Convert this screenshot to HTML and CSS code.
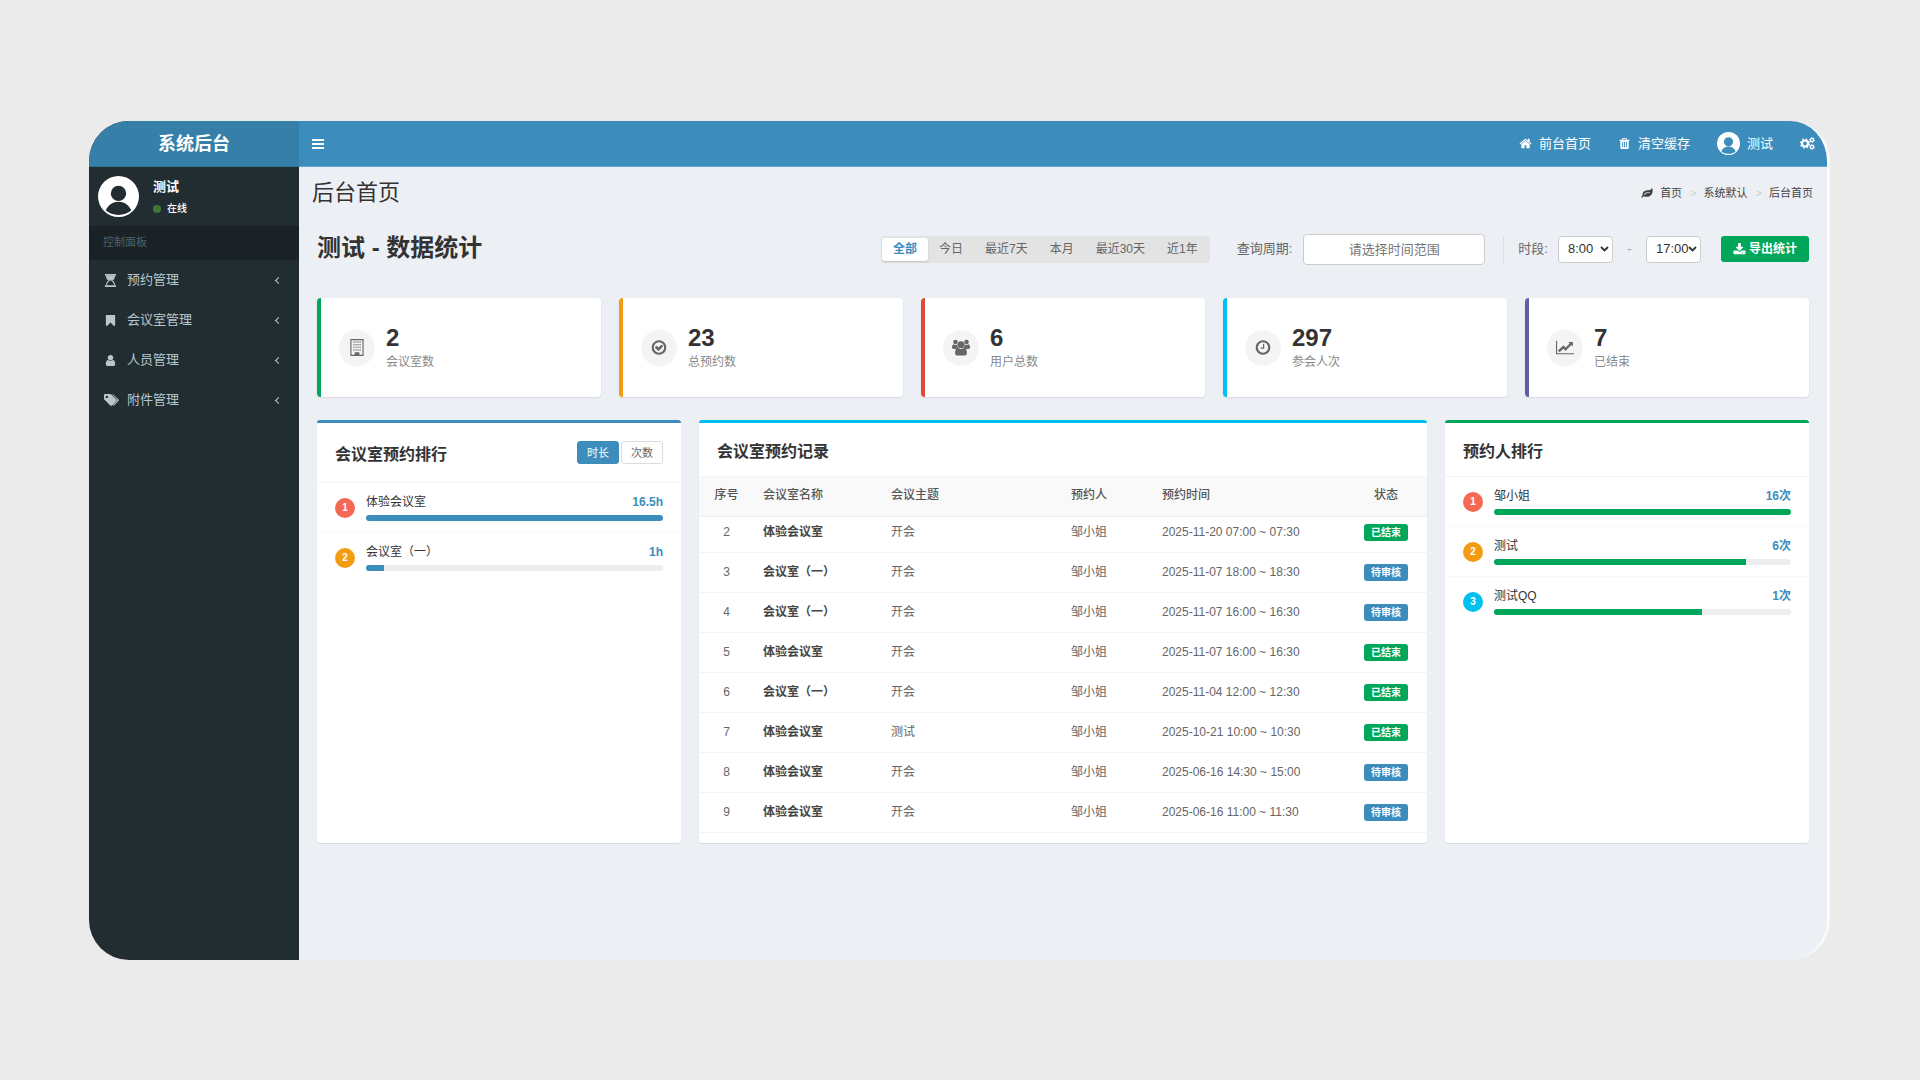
FILE: index.html
```html
<!DOCTYPE html>
<html lang="zh-CN">
<head>
	<meta charset="UTF-8">
	<meta name="viewport" content="width=device-width, initial-scale=1.0">
	<title>系统后台</title>
	<link rel="stylesheet" href="styles.css">
</head>
<body>
	<div class="app">
		<aside class="sidebar">
			<a class="logo" href="#">系统后台</a>
			<div class="user-panel">
				<svg class="avatar" viewBox="0 0 40 40"><circle cx="20" cy="20" r="20" fill="#fff"/><circle cx="20" cy="17" r="7.500" fill="#222d32"/><path d="M7.500 33.500C10 28 14.500 25 20 25s10 3 12.500 8.500C29 36.500 25 38 20 38s-9-1.500-12.500-4.500z" fill="#222d32"/></svg>
				<div>
					<p class="user-name">测试</p>
					<p class="user-status"><i class="dot"></i>在线</p>
				</div>
			</div>
			<div class="menu-header">控制面板</div>
			<nav class="menu">
				<a href="#">
					<svg viewBox="0 0 14 14"><path d="M1 0h12v2H1zM1 12h12v2H1z"/><path d="M2.500 2c0 3 1.500 4 3 5-1.500 1-3 2-3 5M11.500 2c0 3-1.500 4-3 5 1.500 1 3 2 3 5" fill="none" stroke="currentColor" stroke-width="1.200"/><path d="M3 2h8c0 2.500-1.500 4-3.200 5H6.200C4.500 6 3 4.500 3 2z"/></svg>
					<span>预约管理</span><i class="arrow"></i>
				</a>
				<a href="#">
					<svg viewBox="0 0 1792 1792"><path d="M1420 128q23 0 44 9 33 13 52.500 41t19.500 62v1289q0 34-19.500 62t-52.500 41q-19 8-44 8-48 0-83-32l-441-424-441 424q-36 33-83 33-23 0-44-9-33-13-52.500-41t-19.500-62v-1289q0-34 19.500-62t52.500-41q21-9 44-9h1048z"/></svg>
					<span>会议室管理</span><i class="arrow"></i>
				</a>
				<a href="#">
					<svg viewBox="0 0 1792 1792"><path d="M1536 1399q0 109-62.500 187t-150.500 78h-854q-88 0-150.500-78t-62.500-187q0-85 8.500-160.500t31.500-152 58.500-131 94-89 134.500-34.500q131 128 313 128t313-128q76 0 134.500 34.500t94 89 58.500 131 31.500 152 8.500 160.500zm-256-887q0 159-112.500 271.500t-271.500 112.500-271.500-112.500-112.500-271.500 112.500-271.500 271.500-112.500 271.500 112.500 112.500 271.500z"/></svg>
					<span>人员管理</span><i class="arrow"></i>
				</a>
				<a href="#">
					<svg class="tags" viewBox="0 0 15 12"><path fill-rule="evenodd" d="M1 0h5c.6 0 1.200.2 1.600.7l4.600 4.600c.6.6.6 1.200 0 1.800l-4.200 4.300c-.6.6-1.200.6-1.800 0L1.700 6.800C1.200 6.400 0 5.600 0 5V1c0-.6.4-1 1-1zm1.800 1.700a1.200 1.200 0 1 0 0 2.400 1.200 1.200 0 0 0 0-2.400z"/><path d="M7.800 0c.7 0 1.200.3 1.700.7l4.900 4.600c.6.6.6 1.200 0 1.800l-4.200 4.200c-.6.6-1.100.5-1.600 0l4.300-4.400c.6-.6.6-1.200 0-1.800z"/></svg>
					<span>附件管理</span><i class="arrow"></i>
				</a>
			</nav>
		</aside>

		<div class="main">
			<header class="navbar">
				<button class="toggle" type="button" aria-label="菜单">
					<svg viewBox="0 0 12 10"><path d="M0 0h12v2H0zM0 4h12v2H0zM0 8h12v2H0z"/></svg>
				</button>
				<nav class="nav-links">
					<a href="#">
						<svg viewBox="0 0 1792 1792"><path d="M1472 992v480q0 26-19 45t-45 19h-384v-384h-256v384h-384q-26 0-45-19t-19-45v-480q0-1 .5-3t.5-3l575-474 575 474q1 2 1 6zm223-69l-62 74q-8 9-21 11h-3q-13 0-21-7l-692-577-692 577q-12 8-24 7-13-2-21-11l-62-74q-8-10-7-23.500t11-21.500l719-599q32-26 76-26t76 26l244 204v-195q0-14 9-23t23-9h192q14 0 23 9t9 23v408l219 182q10 8 11 21.500t-7 23.500z"/></svg>
						前台首页
					</a>
					<a href="#">
						<svg viewBox="0 0 1792 1792"><path d="M704 1376v-704q0-14-9-23t-23-9h-64q-14 0-23 9t-9 23v704q0 14 9 23t23 9h64q14 0 23-9t9-23zm256 0v-704q0-14-9-23t-23-9h-64q-14 0-23 9t-9 23v704q0 14 9 23t23 9h64q14 0 23-9t9-23zm256 0v-704q0-14-9-23t-23-9h-64q-14 0-23 9t-9 23v704q0 14 9 23t23 9h64q14 0 23-9t9-23zm-544-992h448l-48-117q-7-9-17-11h-317q-10 2-17 11zm928 32v64q0 14-9 23t-23 9h-96v948q0 83-47 143.500t-113 60.500h-832q-66 0-113-58.500t-47-141.500v-952h-96q-14 0-23-9t-9-23v-64q0-14 9-23t23-9h309l70-167q15-37 54-63t79-26h320q40 0 79 26t54 63l70 167h309q14 0 23 9t9 23z"/></svg>
						清空缓存
					</a>
					<a href="#">
						<svg class="avatar-small" viewBox="0 0 40 40"><circle cx="20" cy="20" r="20" fill="#fff"/><circle cx="20" cy="17" r="8" fill="#3c8dbc"/><path d="M7.500 33.500C10 28 14.500 25 20 25s10 3 12.500 8.500C29 36.500 25 38 20 38s-9-1.500-12.500-4.500z" fill="#3c8dbc"/></svg>
						测试
					</a>
					<a href="#" aria-label="设置">
						<svg class="cogs" viewBox="0 0 15 13"><g fill="none" stroke="currentColor"><circle cx="5" cy="6.500" r="3" stroke-width="2.200"/><circle cx="5" cy="6.500" r="4.500" stroke-width="1.200" stroke-dasharray="1.770 1.770"/><circle cx="12" cy="3" r="1.600" stroke-width="1.300"/><circle cx="12" cy="3" r="2.500" stroke-width=".8" stroke-dasharray="1.300 1.300"/><circle cx="12" cy="10" r="1.600" stroke-width="1.300"/><circle cx="12" cy="10" r="2.500" stroke-width=".8" stroke-dasharray="1.300 1.300"/></g></svg>
					</a>
				</nav>
			</header>

			<div class="page-head">
				<h1>后台首页</h1>
				<ol class="breadcrumb">
					<li><a href="#"><svg viewBox="0 0 14 12"><path fill-rule="evenodd" d="M13.300.3C14.300 3 14 7 11 9.200 8.500 11 5.500 10.800 3.300 9.900c-.8.4-1.100 1.800-2 1.800-.6 0-1.200-.7-1.100-1.200.1-.7 1.300-1.100 1.500-1.800C1.200 5 3.500 3 7 2.700c2.500-.2 4.500-.2 5.500-2.100.2-.4.6-.6.8-.3zM10 4.700C7 4.500 5.200 5.600 3.700 7.300c-.4.500.2 1.100.7.700C6 6.500 7.300 5.700 10 5.700c.7 0 .7-1 0-1z"/></svg>首页</a></li>
					<li><a href="#">系统默认</a></li>
					<li><a href="#">后台首页</a></li>
				</ol>
			</div>

			<main class="content">
				<div class="toolbar">
					<h2>测试 - 数据统计</h2>
					<div class="range-tabs">
						<button class="active" type="button">全部</button>
						<button type="button">今日</button>
						<button type="button">最近7天</button>
						<button type="button">本月</button>
						<button type="button">最近30天</button>
						<button type="button">近1年</button>
					</div>
					<div class="period">
						<label for="period">查询周期:</label>
						<input id="period" type="text" placeholder="请选择时间范围">
					</div>
					<div class="hours">
						<label for="hour-from">时段:</label>
						<select id="hour-from"><option>8:00</option></select>
						<span class="dash">-</span>
						<select id="hour-to" aria-label="结束时段"><option>17:00</option></select>
					</div>
					<button class="export" type="button">
						<svg viewBox="0 0 1792 1792"><path d="M1344 1344q0-26-19-45t-45-19-45 19-19 45 19 45 45 19 45-19 19-45zm256 0q0-26-19-45t-45-19-45 19-19 45 19 45 45 19 45-19 19-45zm128-224v320q0 40-28 68t-68 28h-1472q-40 0-68-28t-28-68v-320q0-40 28-68t68-28h465l135 136q58 56 136 56t136-56l136-136h464q40 0 68 28t28 68zm-325-569q17 41-14 70l-448 448q-18 19-45 19t-45-19l-448-448q-31-29-14-70 17-39 59-39h256v-448q0-26 19-45t45-19h256q26 0 45 19t19 45v448h256q42 0 59 39z"/></svg>
						导出统计
					</button>
				</div>

				<div class="stats">
					<div class="stat green">
						<div class="stat-icon"><svg viewBox="0 0 14 18"><path fill-rule="evenodd" d="M0 0h14v18H0zM1.200 1.200v15.600h3.300V14h5v2.800h3.300V1.200z"/><path d="M3 2.500h1.500V4H3zM5.200 2.500h1.500V4H5.200zM7.400 2.500h1.500V4H7.400zM9.600 2.500h1.500V4H9.600zM3 5.300h1.500v1.500H3zM5.200 5.300h1.500v1.500H5.200zM7.400 5.300h1.500v1.500H7.400zM9.600 5.300h1.500v1.500H9.600zM3 8.100h1.500v1.500H3zM5.200 8.100h1.500v1.500H5.200zM7.400 8.100h1.500v1.500H7.400zM9.600 8.100h1.500v1.500H9.600zM3 10.900h1.500v1.500H3zM5.200 10.900h1.500v1.500H5.200zM7.400 10.900h1.500v1.500H7.400zM9.600 10.900h1.500v1.500H9.600zM5.700 15h2.600v2H5.700z" opacity=".7"/></svg></div>
						<div><strong>2</strong><span>会议室数</span></div>
					</div>
					<div class="stat orange">
						<div class="stat-icon"><svg viewBox="0 0 1792 1792"><path d="M1299 813l-422 422q-19 19-45 19t-45-19l-294-294q-19-19-19-45t19-45l102-102q19-19 45-19t45 19l147 147 275-275q19-19 45-19t45 19l102 102q19 19 19 45t-19 45zm141 83q0-148-73-273t-198-198-273-73-273 73-198 198-73 273 73 273 198 198 273 73 273-73 198-198 73-273zm224 0q0 209-103 385.500t-279.500 279.500-385.500 103-385.500-103-279.500-279.500-103-385.500 103-385.500 279.500-279.500 385.500-103 385.500 103 279.500 279.500 103 385.500z"/></svg></div>
						<div><strong>23</strong><span>总预约数</span></div>
					</div>
					<div class="stat red">
						<div class="stat-icon"><svg viewBox="0 0 18 17"><circle cx="3.500" cy="3" r="2.300"/><circle cx="14.500" cy="3" r="2.300"/><path d="M1.500 5.200c1.200.9 2.800.9 4 0-.3 1.800.2 2.800 1 3.800-1 .1-1.900.5-2.500 1H2C.8 10 0 9.400 0 8.500c0-1.500.3-3 1.500-3.300zM16.500 5.200c-1.200.9-2.800.9-4 0 .3 1.800-.2 2.800-1 3.800 1 .1 1.900.5 2.500 1h2c1.200 0 2-.6 2-1.500 0-1.500-.3-3-1.500-3.300z"/><circle cx="9" cy="5.700" r="3.400"/><path d="M6 8.800c1.800 1.500 4.200 1.500 6 0 2.200.2 2.900 2.400 2.900 5.200 0 1.600-1 2.600-2.400 2.600h-7C4.100 16.600 3.100 15.600 3.100 14c0-2.800.7-5 2.900-5.200z"/></svg></div>
						<div><strong>6</strong><span>用户总数</span></div>
					</div>
					<div class="stat cyan">
						<div class="stat-icon"><svg viewBox="0 0 1792 1792"><path d="M1024 544v448q0 14-9 23t-23 9h-320q-14 0-23-9t-9-23v-64q0-14 9-23t23-9h224v-352q0-14 9-23t23-9h64q14 0 23 9t9 23zm416 352q0-148-73-273t-198-198-273-73-273 73-198 198-73 273 73 273 198 198 273 73 273-73 198-198 73-273zm224 0q0 209-103 385.500t-279.500 279.500-385.500 103-385.500-103-279.500-279.500-103-385.500 103-385.500 279.500-279.500 385.500-103 385.500 103 279.500 279.500 103 385.500z"/></svg></div>
						<div><strong>297</strong><span>参会人次</span></div>
					</div>
					<div class="stat purple">
						<div class="stat-icon"><svg viewBox="0 0 2048 1792"><path d="M2048 1536v128h-2048v-1536h128v1408h1920zm-128-1248v435q0 21-19.500 29.500t-35.500-7.500l-121-121-633 633q-10 10-23 10t-23-10l-233-233-416 416-192-192 585-585q10-10 23-10t23 10l233 233 464-464-121-121q-16-16-7.500-35.500t29.500-19.500h435q14 0 23 9t9 23z"/></svg></div>
						<div><strong>7</strong><span>已结束</span></div>
					</div>
				</div>

				<div class="panels">
					<section class="panel blue">
						<div class="panel-head">
							<h3>会议室预约排行</h3>
							<div class="switch">
								<button class="active" type="button">时长</button>
								<button type="button">次数</button>
							</div>
						</div>
						<ul class="rank">
							<li>
								<b class="num n1">1</b>
								<div class="rank-info">
									<p><span>体验会议室</span><strong>16.5h</strong></p>
									<div class="bar"><i style="width:100%"></i></div>
								</div>
							</li>
							<li>
								<b class="num n2">2</b>
								<div class="rank-info">
									<p><span>会议室（一）</span><strong>1h</strong></p>
									<div class="bar"><i style="width:6%"></i></div>
								</div>
							</li>
						</ul>
					</section>

					<section class="panel aqua">
						<div class="panel-head"><h3>会议室预约记录</h3></div>
						<table class="records">
							<colgroup>
								<col class="c-no"><col class="c-room"><col><col class="c-user"><col class="c-time"><col class="c-state">
							</colgroup>
							<thead>
								<tr><th>序号</th><th>会议室名称</th><th>会议主题</th><th>预约人</th><th>预约时间</th><th>状态</th></tr>
							</thead>
							<tbody>
								<tr><td>2</td><td>体验会议室</td><td>开会</td><td>邹小姐</td><td>2025-11-20 07:00 ~ 07:30</td><td><span class="tag done">已结束</span></td></tr>
								<tr><td>3</td><td>会议室（一）</td><td>开会</td><td>邹小姐</td><td>2025-11-07 18:00 ~ 18:30</td><td><span class="tag">待审核</span></td></tr>
								<tr><td>4</td><td>会议室（一）</td><td>开会</td><td>邹小姐</td><td>2025-11-07 16:00 ~ 16:30</td><td><span class="tag">待审核</span></td></tr>
								<tr><td>5</td><td>体验会议室</td><td>开会</td><td>邹小姐</td><td>2025-11-07 16:00 ~ 16:30</td><td><span class="tag done">已结束</span></td></tr>
								<tr><td>6</td><td>会议室（一）</td><td>开会</td><td>邹小姐</td><td>2025-11-04 12:00 ~ 12:30</td><td><span class="tag done">已结束</span></td></tr>
								<tr><td>7</td><td>体验会议室</td><td>测试</td><td>邹小姐</td><td>2025-10-21 10:00 ~ 10:30</td><td><span class="tag done">已结束</span></td></tr>
								<tr><td>8</td><td>体验会议室</td><td>开会</td><td>邹小姐</td><td>2025-06-16 14:30 ~ 15:00</td><td><span class="tag">待审核</span></td></tr>
								<tr><td>9</td><td>体验会议室</td><td>开会</td><td>邹小姐</td><td>2025-06-16 11:00 ~ 11:30</td><td><span class="tag">待审核</span></td></tr>
							</tbody>
						</table>
					</section>

					<section class="panel green">
						<div class="panel-head"><h3>预约人排行</h3></div>
						<ul class="rank">
							<li>
								<b class="num n1">1</b>
								<div class="rank-info">
									<p><span>邹小姐</span><strong>16次</strong></p>
									<div class="bar"><i style="width:100%"></i></div>
								</div>
							</li>
							<li>
								<b class="num n2">2</b>
								<div class="rank-info">
									<p><span>测试</span><strong>6次</strong></p>
									<div class="bar"><i style="width:85%"></i></div>
								</div>
							</li>
							<li>
								<b class="num n3">3</b>
								<div class="rank-info">
									<p><span>测试QQ</span><strong>1次</strong></p>
									<div class="bar"><i style="width:70%"></i></div>
								</div>
							</li>
						</ul>
					</section>
				</div>
			</main>
		</div>
	</div>
</body>
</html>
```
FILE: styles.css
```css
*{
	box-sizing: border-box;
}
body{
	margin: 0;
	padding: 121px 90px 120px 89px;
	background-color: #ebebec;
	font-family: "Liberation Sans", "Noto Sans CJK SC", sans-serif;
	font-size: 12px;
	line-height: 18px;
	color: #333;
}
h1, h2, h3, p, ul, ol{
	margin: 0;
	padding: 0;
}
ul, ol{
	list-style: none;
}
a{
	color: inherit;
	text-decoration: none;
}
button, input, select{
	font-family: inherit;
	line-height: inherit;
	margin: 0;
}
svg{
	fill: currentColor;
	flex: none;
}
.app{
	display: flex;
	min-height: calc(100vh - 241px);
	background-color: #ecf0f5;
	border-right: 3px solid #fafbfd;
	border-radius: 40px;
	overflow: hidden;
}

/* sidebar */
.sidebar{
	width: 210px;
	flex: none;
	background-color: #222d32;
	color: #b8c7ce;
}
.logo{
	display: block;
	height: 46px;
	line-height: 46px;
	background-color: #367fa9;
	border-bottom: 1px solid #307095;
	color: #fff;
	font-size: 18px;
	font-weight: bold;
	text-align: center;
}
.user-panel{
	display: flex;
	gap: 14px;
	height: 59px;
	padding: 9px 9px 8px;
	color: #fff;
}
.avatar{
	width: 41px;
	height: 41px;
}
.user-name{
	font-size: 13px;
	font-weight: bold;
	line-height: 22px;
}
.user-status{
	display: flex;
	align-items: center;
	gap: 6px;
	font-size: 10px;
	font-weight: 500;
	line-height: 22px;
}
.dot{
	width: 8px;
	height: 8px;
	border-radius: 50%;
	background-color: #3c763d;
}
.menu-header{
	height: 34px;
	padding-left: 14px;
	line-height: 33px;
	background-color: #1a2226;
	color: #4b646f;
	font-size: 11px;
}
.menu a{
	display: flex;
	align-items: center;
	height: 40px;
	padding: 0 18px 0 15px;
	font-size: 13px;
}
.menu svg{
	width: 13px;
	height: 13px;
	margin-right: 10px;
}
.menu .tags{
	width: 15px;
	height: 12px;
	margin-right: 8px;
}
.menu span{
	flex: 1;
}
.arrow{
	width: 5px;
	height: 5px;
	border-left: 1px solid #b8c7ce;
	border-bottom: 1px solid #b8c7ce;
	transform: rotate(45deg);
}

/* top bar */
.main{
	flex: 1;
	min-width: 0;
}
.navbar{
	display: flex;
	justify-content: space-between;
	align-items: center;
	height: 46px;
	padding: 0 12px 0 13px;
	background-color: #3c8dbc;
	border-bottom: 1px solid #6aa6cb;
	color: #fff;
}
.toggle{
	display: flex;
	padding: 0;
	border: 0;
	background: none;
	color: #fff;
}
.toggle svg{
	width: 12px;
	height: 10px;
}
.nav-links{
	display: flex;
	align-items: center;
	gap: 27px;
	font-size: 13px;
}
.nav-links a{
	display: flex;
	align-items: center;
	gap: 7px;
}
.nav-links svg{
	width: 13px;
	height: 13px;
}
.nav-links .avatar-small{
	width: 23px;
	height: 23px;
}
.nav-links .cogs{
	width: 15px;
}
.page-head{
	display: flex;
	justify-content: space-between;
	align-items: center;
	height: 52px;
	padding: 0 14px 0 13px;
}
h1{
	font-size: 22px;
	font-weight: normal;
}
.breadcrumb{
	display: flex;
	font-size: 11px;
	color: #444;
}
.breadcrumb a{
	display: inline-flex;
	align-items: center;
	gap: 7px;
}
.breadcrumb svg{
	width: 12px;
	height: 10px;
}
.breadcrumb li{
	display: flex;
}
.breadcrumb li + li::before{
	content: ">";
	padding: 0 7px 0 8px;
	color: #ccc;
}

/* filters */
.content{
	padding: 0 18px;
}
.toolbar{
	display: flex;
	align-items: center;
	height: 60px;
	color: #666;
}
h2{
	margin-right: auto;
	padding-bottom: 3px;
	font-size: 24px;
	color: #333;
}
.range-tabs{
	display: flex;
	padding: 2px 1px;
	background-color: #e3e3e3;
	border-radius: 4px;
}
.range-tabs button{
	height: 23px;
	padding: 0 11px;
	border: 0;
	border-radius: 3px;
	background: none;
	color: #666;
	font-size: 12px;
}
.range-tabs .active{
	background-color: #fff;
	box-shadow: 0 1px 2px rgba(0,0,0,.15);
	color: #3c8dbc;
	font-weight: bold;
}
.period{
	display: flex;
	align-items: center;
	gap: 11px;
	margin: 0 18px 0 27px;
	font-size: 13px;
}
.period input{
	width: 182px;
	height: 31px;
	border: 1px solid #ccc;
	border-radius: 4px;
	background-color: #fff;
	font-size: 13px;
	text-align: center;
}
.period input::placeholder{
	color: #777;
}
.hours{
	display: flex;
	align-items: center;
	gap: 11px;
	height: 27px;
	margin-right: 20px;
	padding-left: 14px;
	border-left: 1px solid #ddd;
	font-size: 13px;
}
.hours label{
	margin-right: -1px;
}
.hours select{
	width: 55px;
	height: 27px;
	padding: 0 0 0 9px;
	border: 1px solid #ccc;
	border-radius: 4px;
	appearance: none;
	background: #fff url("data:image/svg+xml,%3Csvg xmlns='http://www.w3.org/2000/svg' viewBox='0 0 9 6'%3E%3Cpath d='M1 1l3.500 3.500L8 1' fill='none' stroke='%23333' stroke-width='1.800'/%3E%3C/svg%3E") no-repeat right 3px center / 9px 6px;
	color: #333;
	font-size: 13px;
}
.dash{
	width: 11px;
	text-align: center;
	color: #999;
}
.export{
	display: flex;
	align-items: center;
	gap: 3px;
	height: 26px;
	padding: 0 12px;
	border: 0;
	border-radius: 3px;
	background-color: #00a65a;
	color: #fff;
	font-size: 12px;
	font-weight: bold;
}
.export svg{
	width: 13px;
	height: 13px;
}

/* counters */
.stats{
	display: grid;
	grid-template-columns: repeat(5, 1fr);
	gap: 18px;
	margin: 19px 0 23px;
}
.stat{
	display: flex;
	align-items: center;
	gap: 11px;
	height: 99px;
	padding-left: 18px;
	border-left: 4px solid;
	border-radius: 4px;
	background-color: #fff;
	box-shadow: 0 1px 2px rgba(0,0,0,.1);
}
.stat.green{
	border-color: #00a65a;
}
.stat.orange{
	border-color: #f39c12;
}
.stat.red{
	border-color: #dd4b39;
}
.stat.cyan{
	border-color: #00c0ef;
}
.stat.purple{
	border-color: #605ca8;
}
.stat-icon{
	display: flex;
	align-items: center;
	justify-content: center;
	width: 36px;
	height: 36px;
	border-radius: 50%;
	background-color: #f4f4f4;
	color: #666;
}
.stat-icon svg{
	width: 18px;
	height: 17px;
}
.stat strong, .stat span{
	display: block;
}
.stat strong{
	font-size: 24px;
	line-height: 28px;
}
.stat span{
	line-height: 20px;
	color: #888;
}

/* panels */
.panels{
	display: grid;
	grid-template-columns: 1fr 2fr 1fr;
	gap: 18px;
}
.panel{
	min-width: 0;
	min-height: 423px;
	border-top: 3px solid;
	border-radius: 3px;
	background-color: #fff;
	box-shadow: 0 1px 1px rgba(0,0,0,.1);
}
.panel.blue{
	border-color: #3c8dbc;
}
.panel.aqua{
	border-color: #00c0ef;
}
.panel.green{
	border-color: #00a65a;
}
.panel-head{
	display: flex;
	justify-content: space-between;
	height: 54px;
	padding: 16px 18px;
	border-bottom: 1px solid #f4f4f4;
}
.blue .panel-head{
	height: 60px;
	padding: 18px;
}
h3{
	font-size: 16px;
	line-height: 25px;
}
.blue h3{
	line-height: 28px;
}
.switch{
	display: flex;
	gap: 2px;
}
.switch button{
	width: 42px;
	height: 23px;
	padding: 0;
	border: 1px solid #ddd;
	border-radius: 3px;
	background-color: #fff;
	color: #666;
	font-size: 11px;
}
.switch .active{
	border-color: #3c8dbc;
	background-color: #3c8dbc;
	color: #fff;
}
.rank li{
	display: flex;
	align-items: center;
	gap: 11px;
	padding: 11px 18px;
	border-bottom: 1px solid #f9f9f9;
}
.rank li:last-child{
	border-bottom: 0;
}
.num{
	width: 20px;
	border-radius: 50%;
	line-height: 20px;
	font-size: 10px;
	text-align: center;
	color: #fff;
}
.n1{
	background-color: #f56954;
}
.n2{
	background-color: #f39c12;
}
.n3{
	background-color: #00c0ef;
}
.rank-info{
	flex: 1;
}
.rank-info p{
	display: flex;
	justify-content: space-between;
	margin-bottom: 5px;
	line-height: 16px;
}
.rank-info strong{
	color: #3c8dbc;
}
.bar{
	height: 6px;
	border-radius: 3px;
	background-color: #eee;
	overflow: hidden;
}
.bar i{
	display: block;
	height: 100%;
	background-color: #3c8dbc;
}
.green .bar i{
	background-color: #00a65a;
}

/* booking records */
.records{
	width: 100%;
	table-layout: fixed;
	border-collapse: collapse;
	color: #666;
}
.c-no{
	width: 55px;
}
.c-room{
	width: 128px;
}
.c-user{
	width: 91px;
}
.c-time{
	width: 192px;
}
.c-state{
	width: 82px;
}
.records th, .records td{
	height: 40px;
	padding: 0 9px;
	border-bottom: 1px solid #f4f4f4;
	text-align: left;
}
.records th{
	height: 39px;
	padding-bottom: 2px;
	background-color: #f9f9f9;
	border-color: #eee;
	color: #555;
	font-weight: 500;
}
.records tbody tr:first-child td{
	height: 36px;
	padding-bottom: 4px;
}
.records tr > :first-child, .records tr > :last-child{
	text-align: center;
}
.records td:nth-child(2){
	color: #444;
	font-weight: bold;
}
.tag{
	display: inline-block;
	padding: 0 7px;
	border-radius: 3px;
	background-color: #3c8dbc;
	color: #fff;
	font-size: 10px;
	font-weight: bold;
	line-height: 17px;
}
.tag.done{
	background-color: #00a65a;
}
```
